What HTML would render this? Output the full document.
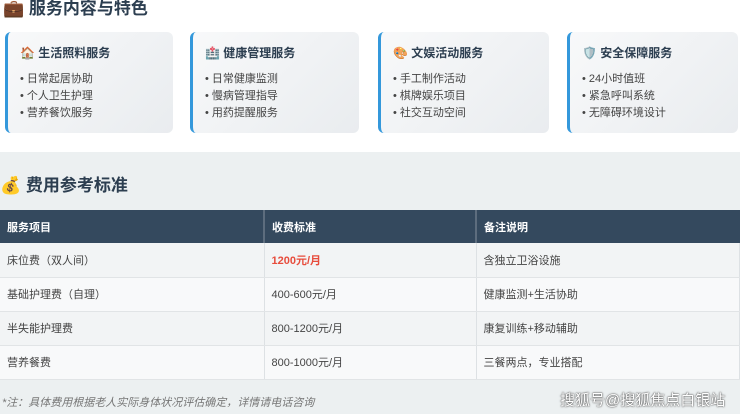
<!DOCTYPE html>
<html><head><meta charset="utf-8"><style>
*{margin:0;padding:0;box-sizing:border-box}
body{width:740px;height:414px;overflow:hidden;font-family:"Liberation Sans","Noto Sans CJK SC",sans-serif;background:#ecf0f1;position:relative;color:#333}
.top{position:absolute;left:0;top:0;width:740px;height:152px;background:#fff}
h2{position:absolute;font-size:17px;font-weight:bold;color:#2c3e50}
.card{position:absolute;top:32px;height:101px;border-radius:6px;background:linear-gradient(135deg,#f8f9fa,#e9ecef);border-left:3px solid #3498db;padding:12px 0 0 12px}
.card h3{font-size:12px;font-weight:bold;color:#2c3e50;margin:0 0 9px 0;height:18px;line-height:18px}
.card li{list-style:none;font-size:11px;line-height:17px;color:#444}
.card li:before{content:"• ";color:#444}
table{position:absolute;left:0;top:210px;width:740px;border-collapse:collapse;font-size:11px}
th{background:#34495e;color:#fff;text-align:left;height:33px;padding-left:7px;font-weight:bold;border-right:2px solid #5d6d7e}
td{height:34px;padding-left:7px;color:#444;border-right:1px solid #dde1e4;border-bottom:1px solid #e1e4e6}
tr.a td{background:#f2f4f5}tr.b td{background:#f8f9fa}
.note{position:absolute;left:2px;top:394px;font-size:11px;font-style:italic;color:#777}
.wm{position:absolute;left:560px;top:389px;font-size:15px;color:#fff;text-shadow:0 0 2px #555,0 0 1px #333}
</style></head><body>
<div class="top"></div>
<h2 style="left:3px;top:-6px">💼 服务内容与特色</h2>
<div class="card" style="left:5px;width:168px"><h3>🏠 生活照料服务</h3><ul><li>日常起居协助</li><li>个人卫生护理</li><li>营养餐饮服务</li></ul></div>
<div class="card" style="left:190px;width:169px"><h3>🏥 健康管理服务</h3><ul><li>日常健康监测</li><li>慢病管理指导</li><li>用药提醒服务</li></ul></div>
<div class="card" style="left:378px;width:171px"><h3>🎨 文娱活动服务</h3><ul><li>手工制作活动</li><li>棋牌娱乐项目</li><li>社交互动空间</li></ul></div>
<div class="card" style="left:567px;width:171px"><h3>🛡️ 安全保障服务</h3><ul><li>24小时值班</li><li>紧急呼叫系统</li><li>无障碍环境设计</li></ul></div>
<h2 style="left:0;top:171px">💰 费用参考标准</h2>
<table>
<tr><th style="width:264px">服务项目</th><th style="width:212px">收费标准</th><th style="border-right:0">备注说明</th></tr>
<tr class="a"><td>床位费（双人间）</td><td style="color:#e74c3c;font-weight:bold">1200元/月</td><td>含独立卫浴设施</td></tr>
<tr class="b"><td>基础护理费（自理）</td><td>400-600元/月</td><td>健康监测+生活协助</td></tr>
<tr class="a"><td>半失能护理费</td><td>800-1200元/月</td><td>康复训练+移动辅助</td></tr>
<tr class="b"><td>营养餐费</td><td>800-1000元/月</td><td>三餐两点，专业搭配</td></tr>
</table>
<div class="note">*注：具体费用根据老人实际身体状况评估确定，详情请电话咨询</div>
<div class="wm">搜狐号@搜狐焦点白银站</div>
</body></html>
